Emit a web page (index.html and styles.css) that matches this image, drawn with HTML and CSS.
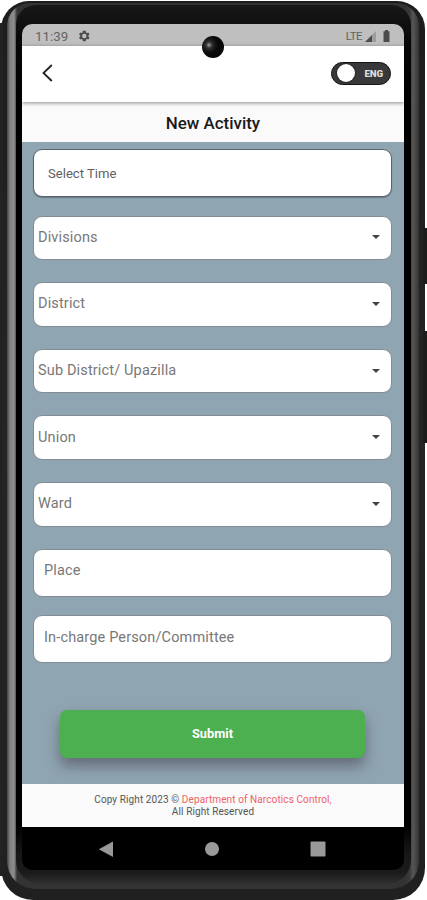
FILE: index.html
```html
<!DOCTYPE html>
<html lang="en">
<head>
<meta charset="utf-8">
<title>New Activity</title>
<link rel="stylesheet" href="styles.css">
</head>
<body>
<div class="phone">
  <span class="side-button power"></span>
  <span class="side-button volume"></span>
  <span class="left-edge"></span>
  <div class="rail"><div class="bezel"><div class="screen">
    <span class="camera"></span>
    <div class="status">
      <span class="clock">11:39</span>
      <svg class="gear" viewBox="0 0 24 24"><path fill-rule="evenodd" d="M19.4 13a7.500 7.500 0 0 0 0-2l2.100-1.650-2-3.460-2.500 1a7.300 7.300 0 0 0-1.700-1L15 3h-5l-.4 2.900a7.300 7.300 0 0 0-1.700 1l-2.400-1-2 3.460L5.600 11a7.500 7.500 0 0 0 0 2l-2.100 1.650 2 3.460 2.400-1a7.300 7.300 0 0 0 1.700 1L10 21h5l.4-2.900a7.300 7.300 0 0 0 1.700-1l2.400 1 2-3.460zM12.500 15.800a3.800 3.800 0 1 1 0-7.600 3.800 3.800 0 0 1 0 7.600z"/></svg>
      <span class="lte">LTE</span>
      <svg class="signal" viewBox="0 0 11 11"><path opacity=".3" d="M11 0v11H0z"/><path d="M7 4v7H0z"/></svg>
      <svg class="battery" viewBox="0 0 7 12"><path d="M2 0h3v1.200h1.500V12h-6V1.200H2z"/></svg>
    </div>
    <header class="appbar">
      <svg class="back" viewBox="0 0 11 18"><path d="M9.800 1L1.500 9l8.300 8"/></svg>
      <div class="toggle"><span class="knob"></span><span class="lang">ENG</span></div>
    </header>
    <h1 class="title">New Activity</h1>
    <main class="form">
      <div class="field time">Select Time</div>
      <div class="field select">Divisions<i class="caret"></i></div>
      <div class="field select">District<i class="caret"></i></div>
      <div class="field select">Sub District/ Upazilla<i class="caret"></i></div>
      <div class="field select">Union<i class="caret"></i></div>
      <div class="field select">Ward<i class="caret"></i></div>
      <div class="field input">Place</div>
      <div class="field input">In-charge Person/Committee</div>
      <div class="submit">Submit</div>
    </main>
    <footer class="footer">
      <div>Copy Right 2023 © <span class="dept">Department of Narcotics Control,</span></div>
      <div>All Right Reserved</div>
    </footer>
    <nav class="nav">
      <svg viewBox="0 0 16 16"><path d="M15 .5v15.500L.8 8.200z"/></svg>
      <svg viewBox="0 0 16 16"><circle cx="8" cy="8" r="7"/></svg>
      <svg viewBox="0 0 16 16"><rect x=".5" y=".5" width="15" height="15" rx="1"/></svg>
    </nav>
  </div></div></div>
</div>
</body>
</html>
```
FILE: styles.css
```css
* { box-sizing: border-box; }
body { margin: 0; background: #fff; font-family: Roboto, sans-serif; overflow: hidden; }
.phone {
  position: relative;
  width: 424px; height: 899px;
  margin: 1px 0 0 1px;
  padding: 2px 6px 11px;
  border-radius: 28px 28px 32px 32px;
  background: linear-gradient(#1d1d1d, #252525 50%, #202020);
}
.side-button { position: absolute; right: -2px; width: 4px; background: #1c1c1b; }
.power { top: 227px; height: 56px; }
.volume { top: 330px; height: 112px; }
.left-edge { position: absolute; left: -1px; top: 22px; width: 3px; height: 853px; background: #222; }
.rail {
  position: relative;
  height: 886px;
  padding: 2px 8px 5px 9px;
  border-radius: 23px 23px 28px 28px;
  background: linear-gradient(90deg, #444 0, #808080 3px, #8e8e8e 7px, #333 10px, #333 399px, #3b3b3b 403px, #595755 406px, #333 412px);
}
.bezel {
  height: 879px;
  padding: 19px 6px 24px;
  border-radius: 20px 20px 24px 24px;
  background: linear-gradient(#181818, #070707 40px, #000 100px, #000 820px, #181818 850px, #1b1b1b 868px, #303030);
}
.screen {
  position: relative;
  width: 382px; height: 846px;
  border-radius: 10px;
  overflow: hidden;
  background: #000;
}
.camera {
  position: absolute; z-index: 2;
  left: 180px; top: 12px;
  width: 22px; height: 22px;
  border-radius: 50%;
  background: radial-gradient(circle at 7px 9px, #c4c4c4 0, #777 1px, #333 3px, #171717 6px, #080808 9px);
}
.status {
  display: flex; align-items: center;
  height: 22px;
  padding: 2px 14px 0 13px;
  background: #bfbfbf; color: #646464;
  font-size: 13.300px;
}
.status svg { fill: #4c4c4c; }
.gear { width: 14px; height: 14px; margin-left: 9px; }
.lte { margin-left: auto; font-size: 11.500px; letter-spacing: -.6px; }
.signal { width: 11px; height: 11px; margin-left: 3px; }
.battery { width: 7px; height: 12px; margin-left: 7px; }
.appbar {
  position: relative; z-index: 1;
  display: flex; align-items: center; justify-content: space-between;
  height: 56px;
  padding: 0 13px 2px 20px;
  background: #fff;
  box-shadow: 0 1px 4px rgba(0,0,0,.45);
}
.back { width: 11px; height: 18px; fill: none; stroke: #222; stroke-width: 1.800; }
.toggle {
  display: flex; align-items: center; justify-content: space-between;
  width: 60px; height: 23px;
  padding: 0 7px 0 5px;
  border: 1px solid #151515;
  border-radius: 12px;
  background: #39393b;
}
.knob { width: 18px; height: 18px; border-radius: 50%; background: #fff; box-shadow: 0 0 2px #000; }
.lang { color: #ddd; font-size: 9.700px; font-weight: 900; letter-spacing: -.1px; }
.title {
  height: 40px; margin: 0;
  background: #fafafa; color: #191919;
  font-size: 16.900px; font-weight: 500; line-height: 42px;
  text-align: center;
}
.form {
  display: grid;
  grid-template-rows: repeat(8, 66.620px) 50px;
  align-items: start;
  height: 642px;
  padding: 7px 12px 0 11px;
  background: #8fa5b1;
}
.field {
  display: flex; align-items: center;
  height: 44.500px;
  border: 1px solid #838c92;
  border-radius: 9px;
  background: #fff; color: #777;
  font-size: 14.500px; letter-spacing: .15px;
}
.time {
  height: 48px; padding: 0 14px;
  border-color: #59636b; color: #606060;
  font-size: 13.100px; letter-spacing: 0;
  box-shadow: 0 1px 1px rgba(40,50,60,.4);
}
.select { justify-content: space-between; padding: 0 11px 1px 4px; }
.input { height: 48px; padding: 0 10px 4px; }
.caret { border: 4.500px solid transparent; border-top: 4.500px solid #444; border-bottom: 0; }
.submit {
  display: flex; align-items: center; justify-content: center;
  height: 48px;
  margin: 28px 27px 0;
  border-radius: 7px;
  background: #4caf50; color: #fff;
  font-size: 12.800px; font-weight: 700;
  box-shadow: 0 8px 14px rgba(65,60,75,.55);
}
.footer {
  position: relative;
  height: 43px; padding-top: 10px;
  background: #fafafa; color: #555;
  font-size: 10px; line-height: 12px; letter-spacing: .1px; text-align: center;
}
.dept { color: #f06168; }
.nav {
  display: flex; justify-content: space-between; align-items: center;
  height: 43px; padding: 0 78px 0 76px;
}
.nav svg { width: 16px; height: 16px; fill: #999; }
```
